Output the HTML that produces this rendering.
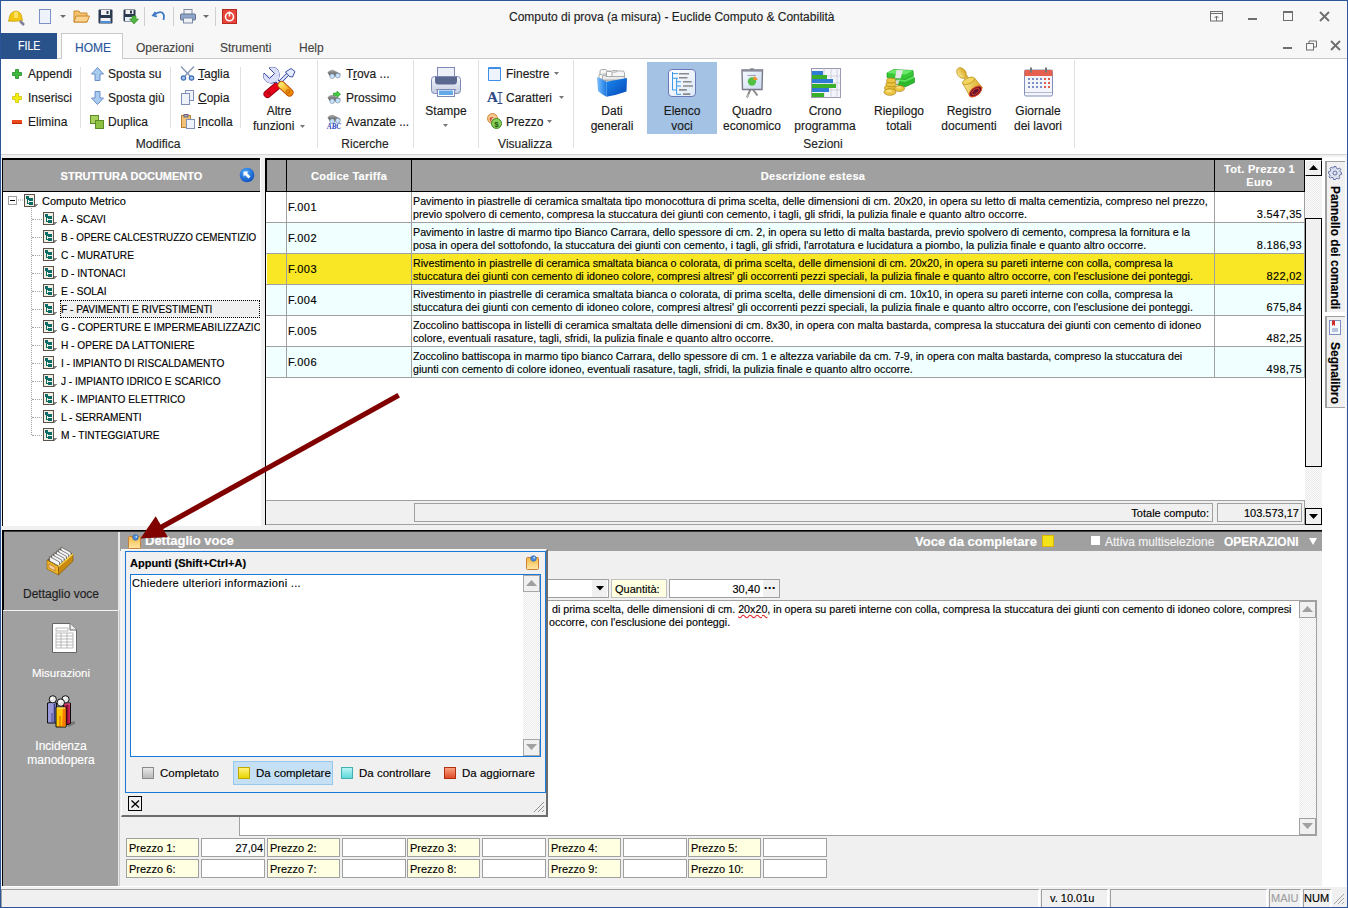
<!DOCTYPE html>
<html><head><meta charset="utf-8">
<style>
*{margin:0;padding:0;box-sizing:border-box}
html,body{width:1348px;height:908px;overflow:hidden;background:#f0f0f0;font-family:"Liberation Sans",sans-serif;font-size:12px;color:#000}
.a{position:absolute}
.t{position:absolute;white-space:nowrap;line-height:12px}
.r{color:#1a1a1a;font-size:12px}
.sep{position:absolute;width:1px;background:#e1e1e1}
.gl{position:absolute;color:#262626;font-size:12px;white-space:nowrap;line-height:12px;text-align:center}
.bc{position:absolute;color:#1a1a1a;font-size:12px;white-space:nowrap;line-height:15px;text-align:center}
.hdr{background:#a0a0a0}
.bk{background:#000}
svg{position:absolute;overflow:visible}
.s11{font-size:11px;line-height:11px}
.t,.bc,.gl{-webkit-text-stroke:0.15px currentColor}

</style></head><body>
<!-- title bar -->
<div class="a" style="left:0;top:0;width:1348px;height:59px;background:#f7f7f7"></div>
<div class="t" style="left:509px;top:11px;font-size:12px;color:#1e1e1e">Computo di prova (a misura) - Euclide Computo &amp; Contabilità</div>
<!-- quick access icons -->
<svg style="left:7px;top:9px" width="18" height="16" viewBox="0 0 18 16">
 <path d="M2 11 Q2 3 9 2 Q15 3 15 10 L16 11 Q9 13 1 12 Z" fill="#f3c614" stroke="#c9a000" stroke-width="0.8"/>
 <path d="M7 3 Q9 2 11 3 L11 9 L7 9Z" fill="#ffe060"/>
 <path d="M13 12 L17 16" stroke="#7d7d96" stroke-width="2.5"/>
</svg>
<div class="a" style="left:39px;top:9px;width:12px;height:15px;background:#eef3fb;border:1px solid #7e91c4"></div>
<svg style="left:60px;top:15px" width="6" height="4"><path d="M0 0H6L3 3Z" fill="#6d6d6d"/></svg>
<svg style="left:73px;top:10px" width="17" height="13" viewBox="0 0 17 13">
 <path d="M1 1H6L7 3H14V12H1Z" fill="#f6c272" stroke="#c98a2e" stroke-width="1"/>
 <path d="M3 6H16.5L14 12H1Z" fill="#fbd38f" stroke="#c98a2e" stroke-width="1"/>
</svg>
<svg style="left:98px;top:9px" width="15" height="15" viewBox="0 0 15 15">
 <rect x="0.5" y="0.5" width="14" height="14" rx="1" fill="#2a3950"/>
 <rect x="3" y="1" width="9" height="5" fill="#f1f1f1"/><rect x="8.5" y="2" width="2" height="3" fill="#2a3950"/>
 <rect x="2.5" y="9" width="10" height="5" fill="#f1f1f1"/><rect x="2.5" y="12" width="10" height="2" fill="#4c8ed8"/>
</svg>
<svg style="left:123px;top:9px" width="16" height="16" viewBox="0 0 16 16">
 <rect x="0.5" y="0.5" width="12" height="12" rx="1" fill="#2a3950"/>
 <rect x="2.5" y="1" width="8" height="4" fill="#f1f1f1"/><rect x="7" y="1.5" width="2" height="3" fill="#2a3950"/>
 <rect x="2" y="8" width="9" height="4" fill="#e6eef8"/>
 <path d="M9 7H13V10H15.5L11 15L6.5 10H9Z" fill="#52b543" stroke="#2e8a22" stroke-width="0.6"/>
</svg>
<div class="a" style="left:144px;top:7px;width:1px;height:19px;background:#d0d0d0"></div>
<svg style="left:152px;top:10px" width="14" height="12" viewBox="0 0 14 12">
 <path d="M3.5 2 L1 5.5 L5 6.5" fill="none" stroke="#3d76c4" stroke-width="1.8"/>
 <path d="M2 5.5 Q6 1 10 2.5 Q13 4.5 11.5 10" fill="none" stroke="#3d76c4" stroke-width="1.8"/>
</svg>
<div class="a" style="left:173px;top:7px;width:1px;height:19px;background:#d0d0d0"></div>
<svg style="left:180px;top:9px" width="16" height="15" viewBox="0 0 16 15">
 <rect x="4" y="0.5" width="8" height="5" fill="#f2f2f2" stroke="#7c8aa6"/>
 <rect x="0.5" y="5" width="15" height="6" rx="1" fill="#8ea6cc" stroke="#61708e"/>
 <rect x="3.5" y="9" width="9" height="5" fill="#eef2f8" stroke="#7c8aa6"/>
</svg>
<svg style="left:203px;top:15px" width="6" height="4"><path d="M0 0H6L3 3Z" fill="#6d6d6d"/></svg>
<div class="a" style="left:215px;top:7px;width:1px;height:19px;background:#d0d0d0"></div>
<svg style="left:222px;top:9px" width="15" height="15" viewBox="0 0 15 15">
 <rect x="0.5" y="0.5" width="14" height="14" fill="#e8463a" stroke="#b52a20"/>
 <circle cx="7.5" cy="7.8" r="4" fill="none" stroke="#fff" stroke-width="1.6"/>
 <rect x="6.7" y="2.5" width="1.6" height="5" fill="#fff"/>
</svg>
<!-- window controls -->
<svg style="left:1210px;top:11px" width="14" height="11" viewBox="0 0 14 11">
 <rect x="0.5" y="0.5" width="12" height="9.5" fill="none" stroke="#6e6e6e"/>
 <path d="M0.5 2.5H12.5" stroke="#6e6e6e"/>
 <path d="M6.5 10V5 M4.5 7L6.5 5L8.5 7" fill="none" stroke="#6e6e6e" stroke-width="1"/>
</svg>
<div class="a" style="left:1248px;top:18px;width:9px;height:2px;background:#6e6e6e"></div>
<div class="a" style="left:1283px;top:11px;width:10px;height:10px;border:1px solid #6e6e6e;border-top-width:2px"></div>
<svg style="left:1319px;top:11px" width="11" height="11" viewBox="0 0 11 11"><path d="M1 1L10 10M10 1L1 10" stroke="#6e6e6e" stroke-width="1.8"/></svg>
<div class="a" style="left:1283px;top:47px;width:9px;height:2px;background:#6e6e6e"></div>
<svg style="left:1306px;top:40px" width="11" height="11" viewBox="0 0 11 11">
 <rect x="0.5" y="3.5" width="7" height="6.5" fill="none" stroke="#6e6e6e"/>
 <path d="M3 3.5V1H10.5V7H8" fill="none" stroke="#6e6e6e"/>
</svg>
<svg style="left:1330px;top:40px" width="11" height="11" viewBox="0 0 11 11"><path d="M1 1L10 10M10 1L1 10" stroke="#6e6e6e" stroke-width="1.8"/></svg>
<!-- tabs -->
<div class="a" style="left:0;top:58px;width:1348px;height:1px;background:#c9c9c9"></div>
<div class="a" style="left:1px;top:33px;width:56px;height:26px;background:#29528a"></div>
<div class="t" style="left:18px;top:40px;color:#fff;font-size:12px;transform:scaleX(0.88);transform-origin:0 0">FILE</div>
<div class="a" style="left:61px;top:33px;width:62px;height:27px;background:#fff;border:1px solid #c9c9c9;border-bottom:none"></div>
<div class="t" style="left:75px;top:42px;color:#2b579a;font-size:12px">HOME</div>
<div class="t" style="left:136px;top:42px;color:#444;font-size:12px">Operazioni</div>
<div class="t" style="left:220px;top:42px;color:#444;font-size:12px">Strumenti</div>
<div class="t" style="left:299px;top:42px;color:#444;font-size:12px">Help</div>
<!-- ribbon -->
<div class="a" style="left:1px;top:59px;width:1346px;height:95px;background:#fff"></div>
<div class="a" style="left:1px;top:154px;width:1346px;height:1px;background:#d5d5d5"></div>
<!-- Modifica -->
<svg style="left:12px;top:69px" width="10" height="10" viewBox="0 0 10 10"><path d="M3.5 0.5H6.5V3.5H9.5V6.5H6.5V9.5H3.5V6.5H0.5V3.5H3.5Z" fill="#3cb83c" stroke="#1f8a1f" stroke-width="0.8"/></svg>
<div class="t r" style="left:28px;top:68px">Appendi</div>
<svg style="left:12px;top:93px" width="10" height="10" viewBox="0 0 10 10"><path d="M3.5 0.5H6.5V3.5H9.5V6.5H6.5V9.5H3.5V6.5H0.5V3.5H3.5Z" fill="#f2ee10" stroke="#d2c200" stroke-width="0.8"/></svg>
<div class="t r" style="left:28px;top:92px">Inserisci</div>
<div class="a" style="left:12px;top:120px;width:10px;height:4px;background:#ea4a1a;border-bottom:1px solid #b92800"></div>
<div class="t r" style="left:28px;top:116px">Elimina</div>
<div class="sep" style="left:80px;top:67px;height:61px"></div>
<svg style="left:91px;top:67px" width="13" height="14" viewBox="0 0 13 14"><path d="M6.5 0.5L12.5 7H9V13.5H4V7H0.5Z" fill="#a9cbef" stroke="#5d86c5" stroke-width="0.9"/></svg>
<div class="t r" style="left:108px;top:68px">Sposta su</div>
<svg style="left:91px;top:91px" width="13" height="14" viewBox="0 0 13 14"><path d="M6.5 13.5L12.5 7H9V0.5H4V7H0.5Z" fill="#a9cbef" stroke="#5d86c5" stroke-width="0.9"/></svg>
<div class="t r" style="left:108px;top:92px">Sposta giù</div>
<svg style="left:90px;top:115px" width="14" height="14" viewBox="0 0 14 14"><rect x="0.5" y="0.5" width="8" height="8" fill="#a8d05c" stroke="#5c8a26"/><rect x="5.5" y="5.5" width="8" height="8" fill="#8cc040" stroke="#5c8a26"/></svg>
<div class="t r" style="left:108px;top:116px">Duplica</div>
<div class="sep" style="left:170px;top:67px;height:61px"></div>
<svg style="left:180px;top:66px" width="15" height="15" viewBox="0 0 15 15"><path d="M1 0.5L10 10M14 0.5L5 10" stroke="#8296b4" stroke-width="1.3"/><circle cx="3.5" cy="12" r="2.2" fill="#a5c4ec" stroke="#3d6fb8" stroke-width="1.2"/><circle cx="11.5" cy="12" r="2.2" fill="#a5c4ec" stroke="#3d6fb8" stroke-width="1.2"/></svg>
<div class="t r" style="left:198px;top:68px"><u>T</u>aglia</div>
<svg style="left:181px;top:90px" width="14" height="15" viewBox="0 0 14 15"><rect x="4.5" y="0.5" width="8" height="10" fill="#eef2fa" stroke="#7f8fb8"/><rect x="0.5" y="3.5" width="8" height="11" fill="#eef2fa" stroke="#7f8fb8"/></svg>
<div class="t r" style="left:198px;top:92px"><u>C</u>opia</div>
<svg style="left:181px;top:114px" width="14" height="15" viewBox="0 0 14 15"><rect x="0.5" y="1.5" width="9" height="12" fill="#f0c27a" stroke="#b8842e"/><rect x="3" y="0.5" width="4" height="2.5" fill="#aab" stroke="#667"/><rect x="5.5" y="5.5" width="8" height="9" fill="#eef2fa" stroke="#7f8fb8"/></svg>
<div class="t r" style="left:198px;top:116px"><u>I</u>ncolla</div>
<div class="sep" style="left:240px;top:67px;height:61px"></div>
<svg style="left:258px;top:62px" width="44" height="42" viewBox="0 0 44 42">
 <defs><linearGradient id="orH" x1="0" y1="0" x2="1" y2="1"><stop offset="0" stop-color="#ffe060"/><stop offset="1" stop-color="#f08a00"/></linearGradient></defs>
 <path d="M19.5 22.5 L30 12" stroke="#2a3a9a" stroke-width="3.6"/>
 <path d="M19.5 22.5 L30 12" stroke="#eaf2ff" stroke-width="1.8"/>
 <path d="M27.5 10 L33 6.5 L37 9.5 L34.5 15 L31.5 14.5 Z" fill="#e4ecff" stroke="#2a3a9a" stroke-width="0.9"/>
 <path d="M9.5 32 L19 24" stroke="#8a0010" stroke-width="8" stroke-linecap="round"/>
 <path d="M9.5 32 L19 24" stroke="#e8001a" stroke-width="6.2" stroke-linecap="round"/>
 <circle cx="11" cy="31" r="1.5" fill="none" stroke="#a00010" stroke-width="0.9"/>
 <path d="M6 11 L11.5 16.5 L16.5 11.5 L11 6 Q17 4 20 8 Q23 13 20 18 L23 21" fill="#dcdff8" stroke="#2a3a9a" stroke-width="0.9"/>
 <path d="M6 11 Q4.5 17 9 20 Q13.5 22.5 18 20 L22 23.5 L24 21.5 L20 18" fill="#dcdff8" stroke="#2a3a9a" stroke-width="0.9"/>
 <path d="M6 11 L11.5 16.5 L16.5 11.5 L11 6 Q17 4 20 8 Q23 13 20 18 Q13.5 22.5 9 20 Q4.5 17 6 11Z" fill="#dcdff8"/>
 <path d="M6 11 L11.5 16.5 L16.5 11.5 L11 6" fill="none" stroke="#2a3a9a" stroke-width="0.9"/>
 <path d="M31.5 30.5 L23.5 23" stroke="#b85000" stroke-width="8" stroke-linecap="round"/>
 <path d="M31.5 30.5 L23.5 23" stroke="url(#orH)" stroke-width="6.2" stroke-linecap="round"/>
 <circle cx="30" cy="29.5" r="1.7" fill="none" stroke="#b85000" stroke-width="0.9"/>
</svg>
<div class="bc" style="left:244px;top:104px;width:70px">Altre</div><div class="t r" style="left:253px;top:119px;line-height:15px">funzioni</div>
<svg style="left:300px;top:125px" width="6" height="4"><path d="M0 0H5L2.5 3Z" fill="#777"/></svg>
<div class="gl" style="left:108px;top:138px;width:100px">Modifica</div>
<div class="sep" style="left:317px;top:60px;height:88px"></div>
<!-- Ricerche -->
<svg style="left:327px;top:69px" width="14" height="11" viewBox="0 0 14 11"><defs><linearGradient id="bnG0" x1="0" y1="0" x2="0" y2="1"><stop offset="0" stop-color="#b0b0b0"/><stop offset="1" stop-color="#404040"/></linearGradient></defs><path d="M0.5 3.5 Q2.5 0.5 6 0.8 L13.5 4.8 L12.5 8 L2.5 6.8Z" fill="url(#bnG0)"/><circle cx="5.2" cy="7.2" r="2.4" fill="#c4e2ff" stroke="#7a8898" stroke-width="0.6"/><circle cx="10.8" cy="6.6" r="2.4" fill="#c4e2ff" stroke="#7a8898" stroke-width="0.6"/></svg>
<div class="t r" style="left:346px;top:68px">T<u>r</u>ova ...</div>
<svg style="left:327px;top:91px" width="14" height="14" viewBox="0 0 14 14"><defs><linearGradient id="bnG3" x1="0" y1="0" x2="0" y2="1"><stop offset="0" stop-color="#b0b0b0"/><stop offset="1" stop-color="#404040"/></linearGradient></defs><path d="M0.5 6.5 Q2.5 3.5 6 3.8 L13.5 7.8 L12.5 11 L2.5 9.8Z" fill="url(#bnG3)"/><circle cx="5.2" cy="10.2" r="2.4" fill="#c4e2ff" stroke="#7a8898" stroke-width="0.6"/><circle cx="10.8" cy="9.6" r="2.4" fill="#c4e2ff" stroke="#7a8898" stroke-width="0.6"/><path d="M6.5 2 H10 V0 L13.5 3.2 L10 6.4 V4.4 H6.5Z" fill="#40d040" stroke="#1e8a1e" stroke-width="0.6"/></svg>
<div class="t r" style="left:346px;top:92px">Prossimo</div>
<svg style="left:327px;top:114px" width="15" height="16" viewBox="0 0 15 16"><defs><linearGradient id="bnG0" x1="0" y1="0" x2="0" y2="1"><stop offset="0" stop-color="#b0b0b0"/><stop offset="1" stop-color="#404040"/></linearGradient></defs><path d="M0.5 3.5 Q2.5 0.5 6 0.8 L13.5 4.8 L12.5 8 L2.5 6.8Z" fill="url(#bnG0)"/><circle cx="5.2" cy="7.2" r="2.4" fill="#c4e2ff" stroke="#7a8898" stroke-width="0.6"/><circle cx="10.8" cy="6.6" r="2.4" fill="#c4e2ff" stroke="#7a8898" stroke-width="0.6"/><text x="0" y="15" font-family="Liberation Serif" font-style="italic" font-weight="bold" font-size="7.5" fill="#2a48b8" textLength="14" lengthAdjust="spacingAndGlyphs">ABC</text></svg>
<div class="t r" style="left:346px;top:116px">Avanzate ...</div>
<div class="gl" style="left:315px;top:138px;width:100px">Ricerche</div>
<div class="sep" style="left:413px;top:60px;height:88px"></div>
<!-- Stampe -->
<svg style="left:424px;top:62px" width="44" height="42" viewBox="0 0 44 42">
 <defs><linearGradient id="prB" x1="0" y1="0" x2="0" y2="1"><stop offset="0" stop-color="#f4f6fb"/><stop offset="1" stop-color="#c4cce0"/></linearGradient></defs>
 <rect x="13.5" y="5.5" width="17" height="12" fill="#eef0f8" stroke="#7d8ab8"/>
 <rect x="7.5" y="14.5" width="29" height="17" rx="3" fill="url(#prB)" stroke="#7d8ab8"/>
 <path d="M11 15 H33 V19 Q33 22.5 30 22.5 H14 Q11 22.5 11 19Z" fill="#5a6890"/>
 <rect x="13.5" y="17.5" width="17" height="0.1" fill="#5a6890"/>
 <rect x="12.5" y="27" width="19" height="1.5" fill="#4a5a88"/>
 <rect x="13.5" y="27.5" width="17" height="7" fill="#fff" stroke="#7d8ab8"/>
 <rect x="15" y="28.5" width="14" height="4.5" fill="#64aae6"/>
</svg>
<div class="bc" style="left:411px;top:104px;width:70px">Stampe</div>
<svg style="left:443px;top:124px" width="6" height="4"><path d="M0 0H5L2.5 3Z" fill="#777"/></svg>
<div class="sep" style="left:478px;top:60px;height:88px"></div>
<!-- Visualizza -->
<div class="a" style="left:488px;top:67px;width:13px;height:14px;background:#eef3fc;border:1px solid #3d8ee6;border-top-width:2px;border-radius:1px"></div>
<div class="t r" style="left:506px;top:68px">Finestre</div>
<svg style="left:554px;top:72px" width="6" height="4"><path d="M0 0H5L2.5 3Z" fill="#777"/></svg>
<div class="t" style="left:487px;top:90px;font-family:'Liberation Serif';font-weight:bold;font-size:15px;line-height:15px;color:#2a4a86">A</div>
<svg style="left:497px;top:92px" width="6" height="12" viewBox="0 0 6 12"><path d="M0.5 0.5H5.5M3 0.5V11.5M0.5 11.5H5.5" stroke="#2a4a86" stroke-width="1"/></svg>
<div class="t r" style="left:506px;top:92px">Caratteri</div>
<svg style="left:559px;top:96px" width="6" height="4"><path d="M0 0H5L2.5 3Z" fill="#777"/></svg>
<svg style="left:487px;top:113px" width="15" height="16" viewBox="0 0 15 16"><circle cx="5.5" cy="5.5" r="5" fill="#f4c690" stroke="#d98a3a"/><text x="2.5" y="8.5" font-size="7" fill="#c0392b" font-family="Liberation Sans">€</text><circle cx="9.5" cy="10.5" r="5" fill="#8ad05a" stroke="#3c8a22"/><text x="7.2" y="13.5" font-size="8" font-weight="bold" fill="#1d5a10" font-family="Liberation Sans">$</text></svg>
<div class="t r" style="left:506px;top:116px">Prezzo</div>
<svg style="left:547px;top:120px" width="6" height="4"><path d="M0 0H5L2.5 3Z" fill="#777"/></svg>
<div class="gl" style="left:475px;top:138px;width:100px">Visualizza</div>
<div class="sep" style="left:573px;top:60px;height:88px"></div>
<!-- Sezioni -->
<div class="a" style="left:647px;top:62px;width:70px;height:72px;background:#a4c2e4"></div>
<svg style="left:590px;top:62px" width="44" height="38" viewBox="0 0 44 38">
 <defs><linearGradient id="dgR" x1="0" y1="0" x2="1" y2="1"><stop offset="0" stop-color="#1a88f0"/><stop offset="1" stop-color="#0648b8"/></linearGradient>
 <linearGradient id="dgL" x1="0" y1="0" x2="1" y2="0"><stop offset="0" stop-color="#7cc0ff"/><stop offset="1" stop-color="#1a78e0"/></linearGradient></defs>
 <path d="M10 18 V9 Q10 7.5 11.5 7.5 H16 L17.5 9 H21 V18Z" fill="#f6f6f6" stroke="#9a9a9a" stroke-width="0.8"/>
 <path d="M16.5 19 V9.5 H21.5 L22.5 8.5 H27 L28 10.5 V19Z" fill="#fafafa" stroke="#9a9a9a" stroke-width="0.8"/>
 <path d="M22 19 V10 H26 L27.5 9 H33.5 L34.5 11 V18Z" fill="#f6f6f6" stroke="#9a9a9a" stroke-width="0.8"/>
 <path d="M9 16 V12.5 H12 L12.5 12 H16 V19Z" fill="#fcfcfc" stroke="#9a9a9a" stroke-width="0.8"/>
 <path d="M12.5 18 V13.5 H15 L16 14.5 H34.5 L35 18Z" fill="#ececec" stroke="#9a9a9a" stroke-width="0.8"/>
 <path d="M7 15 L16.5 19.7 L16.5 34.7 Q11 32 8 29Z" fill="url(#dgL)"/>
 <path d="M16.5 19.7 L37 16 L36.5 29.5 Q27 33 16.5 34.7Z" fill="url(#dgR)"/>
</svg>
<div class="bc" style="left:577px;top:104px;width:70px">Dati<br>generali</div>
<svg style="left:668px;top:69px" width="28" height="28" viewBox="0 0 28 28">
 <defs><linearGradient id="evG" x1="0" y1="0" x2="1" y2="1"><stop offset="0" stop-color="#ffffff"/><stop offset="1" stop-color="#dde8f8"/></linearGradient></defs>
 <rect x="0.5" y="0.5" width="27" height="27" rx="3.5" fill="url(#evG)" stroke="#6a78b8"/>
 <path d="M4.5 3 V21 M4.5 4.6 H10 M4.5 9.2 H10 M8.6 9.2 V25.4 M8.6 12.7 H13 M8.6 17 H13 M4.5 21 H9 M8.6 25.4 H13" fill="none" stroke="#3a9ae8" stroke-width="1"/>
 <path d="M11 4.8 H21 M11 8.8 H19.5 M15 12.7 H23.7 M15 17 H25 M11 20.9 H18.8 M15 25.1 H22.3" stroke="#8a8a8a" stroke-width="1.6"/>
</svg>
<div class="bc" style="left:647px;top:104px;width:70px">Elenco<br>voci</div>
<svg style="left:741px;top:67px" width="24" height="32" viewBox="0 0 24 32">
 <defs><linearGradient id="qeG" x1="0" y1="0" x2="1" y2="1"><stop offset="0" stop-color="#f8fbff"/><stop offset="1" stop-color="#c8daf0"/></linearGradient></defs>
 <path d="M9.5 22 L6 30.5 M11.5 22 L16.5 28.5" stroke="#8a8a8a" stroke-width="2"/>
 <path d="M6 30.5 L7.5 27" stroke="#dcdcdc" stroke-width="0.8"/>
 <rect x="9" y="1" width="4" height="2" rx="0.5" fill="#a8a8a8"/>
 <path d="M1 3 H21.5 L21 22.5 H1.5Z" fill="url(#qeG)" stroke="#7a7a88" stroke-width="1.4"/>
 <rect x="1" y="3" width="20.5" height="1.6" fill="#8a8a9a"/>
 <path d="M6.5 8.4 H15" stroke="#8a8aa0" stroke-width="0.8"/>
 <circle cx="11" cy="14.5" r="4.2" fill="#52c042"/>
 <path d="M12.5 9.5 A4 4 0 0 1 16.5 13 L12.5 13Z" fill="#f5902e"/>
</svg>
<div class="bc" style="left:717px;top:104px;width:70px">Quadro<br>economico</div>
<svg style="left:811px;top:68px" width="30" height="30" viewBox="0 0 30 30">
 <rect x="0.5" y="0.5" width="29" height="29" fill="#f4f4fb" stroke="#9a9ab0"/>
 <path d="M13 0.5V29.5 M20 0.5V29.5 M26 0.5V29.5 M0.5 8H29.5 M0.5 15H29.5 M0.5 22H29.5" stroke="#c9c9d8" stroke-width="0.8"/>
 <rect x="1" y="3" width="11" height="4" fill="#2f7ad6"/><rect x="1" y="7" width="15" height="4" fill="#3ab02a"/>
 <rect x="1" y="11" width="21" height="4" fill="#2f7ad6"/><rect x="1" y="16" width="24" height="4" fill="#3ab02a"/>
 <rect x="1" y="20" width="17" height="4" fill="#2f7ad6"/><rect x="1" y="25" width="12" height="4" fill="#3ab02a"/>
</svg>
<div class="bc" style="left:790px;top:104px;width:70px">Crono<br>programma</div>
<svg style="left:876px;top:62px" width="42" height="38" viewBox="0 0 42 38">
 <path d="M18 18 L37 14.5 L38.5 16 L38.5 20.5 L29 25 L18.5 22Z" fill="#2cb82c" stroke="#1a8a1a" stroke-width="0.6"/>
 <path d="M18 18 L37 14.5 L38.5 16 L29 20Z" fill="#58e058"/>
 <path d="M11 11 L17.5 7.5 L37 8.5 L37.5 13.5 L29 17.5 L11 15.5Z" fill="#36c836" stroke="#1a8a1a" stroke-width="0.6"/>
 <path d="M11 11 L17.5 7.5 L37 8.5 L29.5 12.5Z" fill="#6ae86a"/>
 <path d="M20.5 8 L27 8.3 L24.5 16.5 L19 16Z" fill="#e6e6e6"/>
 <path d="M19 18.5 L23.5 18 L22 22.5 L18.5 22Z" fill="#dcdcdc"/>
 <g fill="#ecc640" stroke="#a88010" stroke-width="0.7">
 <ellipse cx="14" cy="26" rx="5.5" ry="3.4"/>
 <ellipse cx="15" cy="22" rx="5" ry="2.8"/>
 <ellipse cx="15" cy="18.5" rx="4.5" ry="2.5"/>
 <ellipse cx="14" cy="30" rx="6" ry="3.3"/>
 <ellipse cx="23.5" cy="26.5" rx="5" ry="3"/>
 </g>
 <ellipse cx="13" cy="29" rx="3" ry="1.2" fill="#f8e080"/><ellipse cx="23" cy="25.5" rx="2.5" ry="1" fill="#f8e080"/>
</svg>
<div class="bc" style="left:864px;top:104px;width:70px">Riepilogo<br>totali</div>
<svg style="left:952px;top:62px" width="34" height="38" viewBox="0 0 34 38">
 <defs><linearGradient id="stG" x1="0" y1="0" x2="1" y2="0"><stop offset="0" stop-color="#f8e890"/><stop offset="1" stop-color="#d8a820"/></linearGradient></defs>
 <path d="M11 14.5 L15 20.5 L18.5 19 L14.5 13Z" fill="url(#stG)" stroke="#b88a10" stroke-width="0.7"/>
 <ellipse cx="9.5" cy="11" rx="4.2" ry="5.8" transform="rotate(-35 9.5 11)" fill="url(#stG)" stroke="#b88a10" stroke-width="0.7"/>
 <path d="M10.5 21 L22.5 16 L30.5 26 L18 34.5Z" fill="url(#stG)" stroke="#b88a10" stroke-width="0.7"/>
 <ellipse cx="16.5" cy="18.8" rx="6.3" ry="2.9" transform="rotate(-24 16.5 18.8)" fill="#f2d660" stroke="#b88a10" stroke-width="0.7"/>
 <ellipse cx="23.5" cy="29.5" rx="7.2" ry="4" transform="rotate(-38 23.5 29.5)" fill="#6a1030" stroke="#e04a20" stroke-width="1"/>
 <ellipse cx="23.5" cy="29.5" rx="4.4" ry="2.2" transform="rotate(-38 23.5 29.5)" fill="none" stroke="#e04a20" stroke-width="0.8"/>
</svg>
<div class="bc" style="left:934px;top:104px;width:70px">Registro<br>documenti</div>
<svg style="left:1024px;top:67px" width="29" height="30" viewBox="0 0 29 30">
 <rect x="0.5" y="3" width="28" height="26" rx="1.5" fill="#f3f5fa" stroke="#8090b8"/>
 <rect x="0.5" y="3" width="28" height="6" fill="#e66050"/>
 <rect x="6" y="0.5" width="2" height="5" fill="#777"/><rect x="21" y="0.5" width="2" height="5" fill="#777"/>
 <g fill="#7a8fc8"><rect x="4" y="11" width="2" height="2"/><rect x="8" y="11" width="2" height="2"/><rect x="12" y="11" width="2" height="2"/><rect x="16" y="11" width="2" height="2"/>
 <rect x="4" y="15" width="2" height="2"/><rect x="8" y="15" width="2" height="2"/><rect x="12" y="15" width="2" height="2"/><rect x="16" y="15" width="2" height="2"/>
 <rect x="4" y="19" width="2" height="2"/><rect x="8" y="19" width="2" height="2"/><rect x="12" y="19" width="2" height="2"/><rect x="16" y="19" width="2" height="2"/></g>
 <g fill="#e25a4a"><rect x="20" y="11" width="2" height="2"/><rect x="24" y="11" width="2" height="2"/><rect x="20" y="15" width="2" height="2"/><rect x="24" y="15" width="2" height="2"/><rect x="20" y="19" width="2" height="2"/><rect x="24" y="19" width="2" height="2"/></g>
 <rect x="1" y="25" width="27" height="1" fill="#b0b8d0"/>
</svg>
<div class="bc" style="left:1003px;top:104px;width:70px">Giornale<br>dei lavori</div>
<div class="gl" style="left:773px;top:138px;width:100px">Sezioni</div>
<div class="sep" style="left:1074px;top:60px;height:88px"></div>
<!-- left tree panel -->
<div class="a" style="left:2px;top:158px;width:259px;height:368px;background:#fff"></div>
<div class="a bk" style="left:2px;top:158px;width:258px;height:2px"></div>
<div class="a bk" style="left:2px;top:158px;width:1px;height:368px"></div>
<div class="a hdr" style="left:3px;top:160px;width:257px;height:31px"></div>
<div class="a bk" style="left:3px;top:191px;width:257px;height:1px"></div>
<div class="t" style="left:3px;top:171px;width:257px;text-align:center;color:#fff;font-weight:bold;font-size:11px;line-height:11px">STRUTTURA DOCUMENTO</div>
<svg style="left:239px;top:167px" width="16" height="16" viewBox="0 0 16 16">
 <defs><radialGradient id="bg1" cx="0.4" cy="0.3" r="0.8"><stop offset="0" stop-color="#4aa8ff"/><stop offset="1" stop-color="#0848b8"/></radialGradient></defs>
 <circle cx="8" cy="8" r="7.3" fill="url(#bg1)"/>
 <path d="M4.5 4.5H9.5L8 6L11.5 9.5L9.5 11.5L6 8L4.5 9.5Z" fill="#fff"/>
</svg>
<div class="a" style="left:8px;top:196px;width:9px;height:9px;border:1px solid #a0a0a0;background:#fff"></div>
<div class="a" style="left:10px;top:200px;width:5px;height:1px;background:#000"></div>
<svg style="left:17px;top:199px" width="8" height="2"><path d="M1 1H2 M3 1H4 M5 1H6" stroke="#a0a0a0" stroke-width="1"/></svg>
<svg style="left:24px;top:194px" width="15" height="14" viewBox="0 0 15 14" shape-rendering="crispEdges"><path d="M11 10H14L11 13Z" fill="#8a8a8a"/><rect x="0.5" y="0.5" width="10" height="12" fill="#f3efe3" stroke="#5a524a"/><g fill="#0b6b66"><rect x="2" y="2" width="3" height="3"/><rect x="5" y="4" width="4" height="3"/><rect x="5" y="8" width="4" height="3"/><rect x="3" y="5" width="1" height="5"/><rect x="4" y="5" width="1" height="1"/><rect x="4" y="9" width="1" height="1"/></g></svg>
<div class="t s11" style="left:42px;top:196px">Computo Metrico</div>
<div class="a" style="left:31px;top:208px;width:1px;height:227px;border-left:1px dotted #a0a0a0"></div>
<div class="a" style="left:32px;top:219px;width:10px;height:1px;border-top:1px dotted #a0a0a0"></div>
<svg style="left:43px;top:212px" width="15" height="14" viewBox="0 0 15 14" shape-rendering="crispEdges"><path d="M11 10H14L11 13Z" fill="#8a8a8a"/><rect x="0.5" y="0.5" width="10" height="12" fill="#f3efe3" stroke="#5a524a"/><g fill="#0b6b66"><rect x="2" y="2" width="3" height="3"/><rect x="5" y="4" width="4" height="3"/><rect x="5" y="8" width="4" height="3"/><rect x="3" y="5" width="1" height="5"/><rect x="4" y="5" width="1" height="1"/><rect x="4" y="9" width="1" height="1"/></g></svg>
<div class="a" style="left:61px;top:214px;width:199px;height:12px;overflow:hidden"><div class="t s11" style="left:0;top:0;transform:scaleX(0.92);transform-origin:0 0">A - SCAVI</div></div>
<div class="a" style="left:32px;top:237px;width:10px;height:1px;border-top:1px dotted #a0a0a0"></div>
<svg style="left:43px;top:230px" width="15" height="14" viewBox="0 0 15 14" shape-rendering="crispEdges"><path d="M11 10H14L11 13Z" fill="#8a8a8a"/><rect x="0.5" y="0.5" width="10" height="12" fill="#f3efe3" stroke="#5a524a"/><g fill="#0b6b66"><rect x="2" y="2" width="3" height="3"/><rect x="5" y="4" width="4" height="3"/><rect x="5" y="8" width="4" height="3"/><rect x="3" y="5" width="1" height="5"/><rect x="4" y="5" width="1" height="1"/><rect x="4" y="9" width="1" height="1"/></g></svg>
<div class="a" style="left:61px;top:232px;width:199px;height:12px;overflow:hidden"><div class="t s11" style="left:0;top:0;transform:scaleX(0.895);transform-origin:0 0">B - OPERE CALCESTRUZZO CEMENTIZIO</div></div>
<div class="a" style="left:32px;top:255px;width:10px;height:1px;border-top:1px dotted #a0a0a0"></div>
<svg style="left:43px;top:248px" width="15" height="14" viewBox="0 0 15 14" shape-rendering="crispEdges"><path d="M11 10H14L11 13Z" fill="#8a8a8a"/><rect x="0.5" y="0.5" width="10" height="12" fill="#f3efe3" stroke="#5a524a"/><g fill="#0b6b66"><rect x="2" y="2" width="3" height="3"/><rect x="5" y="4" width="4" height="3"/><rect x="5" y="8" width="4" height="3"/><rect x="3" y="5" width="1" height="5"/><rect x="4" y="5" width="1" height="1"/><rect x="4" y="9" width="1" height="1"/></g></svg>
<div class="a" style="left:61px;top:250px;width:199px;height:12px;overflow:hidden"><div class="t s11" style="left:0;top:0;transform:scaleX(0.92);transform-origin:0 0">C - MURATURE</div></div>
<div class="a" style="left:32px;top:273px;width:10px;height:1px;border-top:1px dotted #a0a0a0"></div>
<svg style="left:43px;top:266px" width="15" height="14" viewBox="0 0 15 14" shape-rendering="crispEdges"><path d="M11 10H14L11 13Z" fill="#8a8a8a"/><rect x="0.5" y="0.5" width="10" height="12" fill="#f3efe3" stroke="#5a524a"/><g fill="#0b6b66"><rect x="2" y="2" width="3" height="3"/><rect x="5" y="4" width="4" height="3"/><rect x="5" y="8" width="4" height="3"/><rect x="3" y="5" width="1" height="5"/><rect x="4" y="5" width="1" height="1"/><rect x="4" y="9" width="1" height="1"/></g></svg>
<div class="a" style="left:61px;top:268px;width:199px;height:12px;overflow:hidden"><div class="t s11" style="left:0;top:0;transform:scaleX(0.92);transform-origin:0 0">D - INTONACI</div></div>
<div class="a" style="left:32px;top:291px;width:10px;height:1px;border-top:1px dotted #a0a0a0"></div>
<svg style="left:43px;top:284px" width="15" height="14" viewBox="0 0 15 14" shape-rendering="crispEdges"><path d="M11 10H14L11 13Z" fill="#8a8a8a"/><rect x="0.5" y="0.5" width="10" height="12" fill="#f3efe3" stroke="#5a524a"/><g fill="#0b6b66"><rect x="2" y="2" width="3" height="3"/><rect x="5" y="4" width="4" height="3"/><rect x="5" y="8" width="4" height="3"/><rect x="3" y="5" width="1" height="5"/><rect x="4" y="5" width="1" height="1"/><rect x="4" y="9" width="1" height="1"/></g></svg>
<div class="a" style="left:61px;top:286px;width:199px;height:12px;overflow:hidden"><div class="t s11" style="left:0;top:0;transform:scaleX(0.92);transform-origin:0 0">E - SOLAI</div></div>
<div class="a" style="left:32px;top:309px;width:10px;height:1px;border-top:1px dotted #a0a0a0"></div>
<div class="a" style="left:60px;top:300px;width:200px;height:18px;background:#f0f0f0;border:1px dotted #000"></div>
<svg style="left:43px;top:302px" width="15" height="14" viewBox="0 0 15 14" shape-rendering="crispEdges"><path d="M11 10H14L11 13Z" fill="#8a8a8a"/><rect x="0.5" y="0.5" width="10" height="12" fill="#f3efe3" stroke="#5a524a"/><g fill="#0b6b66"><rect x="2" y="2" width="3" height="3"/><rect x="5" y="4" width="4" height="3"/><rect x="5" y="8" width="4" height="3"/><rect x="3" y="5" width="1" height="5"/><rect x="4" y="5" width="1" height="1"/><rect x="4" y="9" width="1" height="1"/></g></svg>
<div class="a" style="left:61px;top:304px;width:199px;height:12px;overflow:hidden"><div class="t s11" style="left:0;top:0;transform:scaleX(0.92);transform-origin:0 0">F - PAVIMENTI E RIVESTIMENTI</div></div>
<div class="a" style="left:32px;top:327px;width:10px;height:1px;border-top:1px dotted #a0a0a0"></div>
<svg style="left:43px;top:320px" width="15" height="14" viewBox="0 0 15 14" shape-rendering="crispEdges"><path d="M11 10H14L11 13Z" fill="#8a8a8a"/><rect x="0.5" y="0.5" width="10" height="12" fill="#f3efe3" stroke="#5a524a"/><g fill="#0b6b66"><rect x="2" y="2" width="3" height="3"/><rect x="5" y="4" width="4" height="3"/><rect x="5" y="8" width="4" height="3"/><rect x="3" y="5" width="1" height="5"/><rect x="4" y="5" width="1" height="1"/><rect x="4" y="9" width="1" height="1"/></g></svg>
<div class="a" style="left:61px;top:322px;width:199px;height:12px;overflow:hidden"><div class="t s11" style="left:0;top:0;transform:scaleX(0.92);transform-origin:0 0">G - COPERTURE E IMPERMEABILIZZAZIONI</div></div>
<div class="a" style="left:32px;top:345px;width:10px;height:1px;border-top:1px dotted #a0a0a0"></div>
<svg style="left:43px;top:338px" width="15" height="14" viewBox="0 0 15 14" shape-rendering="crispEdges"><path d="M11 10H14L11 13Z" fill="#8a8a8a"/><rect x="0.5" y="0.5" width="10" height="12" fill="#f3efe3" stroke="#5a524a"/><g fill="#0b6b66"><rect x="2" y="2" width="3" height="3"/><rect x="5" y="4" width="4" height="3"/><rect x="5" y="8" width="4" height="3"/><rect x="3" y="5" width="1" height="5"/><rect x="4" y="5" width="1" height="1"/><rect x="4" y="9" width="1" height="1"/></g></svg>
<div class="a" style="left:61px;top:340px;width:199px;height:12px;overflow:hidden"><div class="t s11" style="left:0;top:0;transform:scaleX(0.92);transform-origin:0 0">H - OPERE DA LATTONIERE</div></div>
<div class="a" style="left:32px;top:363px;width:10px;height:1px;border-top:1px dotted #a0a0a0"></div>
<svg style="left:43px;top:356px" width="15" height="14" viewBox="0 0 15 14" shape-rendering="crispEdges"><path d="M11 10H14L11 13Z" fill="#8a8a8a"/><rect x="0.5" y="0.5" width="10" height="12" fill="#f3efe3" stroke="#5a524a"/><g fill="#0b6b66"><rect x="2" y="2" width="3" height="3"/><rect x="5" y="4" width="4" height="3"/><rect x="5" y="8" width="4" height="3"/><rect x="3" y="5" width="1" height="5"/><rect x="4" y="5" width="1" height="1"/><rect x="4" y="9" width="1" height="1"/></g></svg>
<div class="a" style="left:61px;top:358px;width:199px;height:12px;overflow:hidden"><div class="t s11" style="left:0;top:0;transform:scaleX(0.92);transform-origin:0 0">I - IMPIANTO DI RISCALDAMENTO</div></div>
<div class="a" style="left:32px;top:381px;width:10px;height:1px;border-top:1px dotted #a0a0a0"></div>
<svg style="left:43px;top:374px" width="15" height="14" viewBox="0 0 15 14" shape-rendering="crispEdges"><path d="M11 10H14L11 13Z" fill="#8a8a8a"/><rect x="0.5" y="0.5" width="10" height="12" fill="#f3efe3" stroke="#5a524a"/><g fill="#0b6b66"><rect x="2" y="2" width="3" height="3"/><rect x="5" y="4" width="4" height="3"/><rect x="5" y="8" width="4" height="3"/><rect x="3" y="5" width="1" height="5"/><rect x="4" y="5" width="1" height="1"/><rect x="4" y="9" width="1" height="1"/></g></svg>
<div class="a" style="left:61px;top:376px;width:199px;height:12px;overflow:hidden"><div class="t s11" style="left:0;top:0;transform:scaleX(0.92);transform-origin:0 0">J - IMPIANTO IDRICO E SCARICO</div></div>
<div class="a" style="left:32px;top:399px;width:10px;height:1px;border-top:1px dotted #a0a0a0"></div>
<svg style="left:43px;top:392px" width="15" height="14" viewBox="0 0 15 14" shape-rendering="crispEdges"><path d="M11 10H14L11 13Z" fill="#8a8a8a"/><rect x="0.5" y="0.5" width="10" height="12" fill="#f3efe3" stroke="#5a524a"/><g fill="#0b6b66"><rect x="2" y="2" width="3" height="3"/><rect x="5" y="4" width="4" height="3"/><rect x="5" y="8" width="4" height="3"/><rect x="3" y="5" width="1" height="5"/><rect x="4" y="5" width="1" height="1"/><rect x="4" y="9" width="1" height="1"/></g></svg>
<div class="a" style="left:61px;top:394px;width:199px;height:12px;overflow:hidden"><div class="t s11" style="left:0;top:0;transform:scaleX(0.92);transform-origin:0 0">K - IMPIANTO ELETTRICO</div></div>
<div class="a" style="left:32px;top:417px;width:10px;height:1px;border-top:1px dotted #a0a0a0"></div>
<svg style="left:43px;top:410px" width="15" height="14" viewBox="0 0 15 14" shape-rendering="crispEdges"><path d="M11 10H14L11 13Z" fill="#8a8a8a"/><rect x="0.5" y="0.5" width="10" height="12" fill="#f3efe3" stroke="#5a524a"/><g fill="#0b6b66"><rect x="2" y="2" width="3" height="3"/><rect x="5" y="4" width="4" height="3"/><rect x="5" y="8" width="4" height="3"/><rect x="3" y="5" width="1" height="5"/><rect x="4" y="5" width="1" height="1"/><rect x="4" y="9" width="1" height="1"/></g></svg>
<div class="a" style="left:61px;top:412px;width:199px;height:12px;overflow:hidden"><div class="t s11" style="left:0;top:0;transform:scaleX(0.92);transform-origin:0 0">L - SERRAMENTI</div></div>
<div class="a" style="left:32px;top:435px;width:10px;height:1px;border-top:1px dotted #a0a0a0"></div>
<svg style="left:43px;top:428px" width="15" height="14" viewBox="0 0 15 14" shape-rendering="crispEdges"><path d="M11 10H14L11 13Z" fill="#8a8a8a"/><rect x="0.5" y="0.5" width="10" height="12" fill="#f3efe3" stroke="#5a524a"/><g fill="#0b6b66"><rect x="2" y="2" width="3" height="3"/><rect x="5" y="4" width="4" height="3"/><rect x="5" y="8" width="4" height="3"/><rect x="3" y="5" width="1" height="5"/><rect x="4" y="5" width="1" height="1"/><rect x="4" y="9" width="1" height="1"/></g></svg>
<div class="a" style="left:61px;top:430px;width:199px;height:12px;overflow:hidden"><div class="t s11" style="left:0;top:0;transform:scaleX(0.92);transform-origin:0 0">M - TINTEGGIATURE</div></div>
<!-- grid panel -->
<div class="a" style="left:265px;top:158px;width:1040px;height:367px;background:#fff"></div>
<div class="a bk" style="left:265px;top:158px;width:1057px;height:2px"></div>
<div class="a bk" style="left:265px;top:158px;width:1px;height:367px"></div>
<div class="a bk" style="left:266px;top:158px;width:1px;height:34px"></div>
<div class="a hdr" style="left:267px;top:160px;width:1037px;height:31px"></div>
<div class="a bk" style="left:267px;top:191px;width:1038px;height:1px"></div>
<div class="a bk" style="left:286px;top:160px;width:1px;height:31px"></div>
<div class="a bk" style="left:411px;top:160px;width:1px;height:31px"></div>
<div class="a bk" style="left:1214px;top:160px;width:1px;height:31px"></div>
<div class="a bk" style="left:1304px;top:160px;width:1px;height:31px"></div>
<div class="t" style="left:287px;top:171px;width:124px;text-align:center;color:#fff;font-weight:bold;font-size:11px;line-height:11px;letter-spacing:0.25px">Codice Tariffa</div>
<div class="t" style="left:412px;top:171px;width:802px;text-align:center;color:#fff;font-weight:bold;font-size:11px;line-height:11px;letter-spacing:0.3px">Descrizione estesa</div>
<div class="t" style="left:1215px;top:163px;width:89px;text-align:center;color:#fff;font-weight:bold;font-size:11px;line-height:13px;letter-spacing:0.3px">Tot. Prezzo 1<br>Euro</div>
<div class="a" style="left:267px;top:192px;width:1037px;height:30px;background:#fff"></div>
<div class="a" style="left:266px;top:222px;width:1039px;height:1px;background:#a0a0a0"></div>
<div class="t s11" style="left:288px;top:202px;letter-spacing:0.4px">F.001</div>
<div class="t" style="left:413px;top:195px;font-size:11px;line-height:13px;transform:scaleX(0.973);transform-origin:0 0">Pavimento in piastrelle di ceramica smaltata tipo monocottura di prima scelta, delle dimensioni di cm. 20x20, in opera su letto di malta cementizia, compreso nel prezzo,<br>previo spolvero di cemento, compresa la stuccatura dei giunti con cemento, i tagli, gli sfridi, la pulizia finale e quanto altro occorre.</div>
<div class="t s11" style="left:1215px;top:209px;width:87px;text-align:right;letter-spacing:0.3px">3.547,35</div>
<div class="a" style="left:267px;top:223px;width:1037px;height:30px;background:#f0ffff"></div>
<div class="a" style="left:266px;top:253px;width:1039px;height:1px;background:#a0a0a0"></div>
<div class="t s11" style="left:288px;top:233px;letter-spacing:0.4px">F.002</div>
<div class="t" style="left:413px;top:226px;font-size:11px;line-height:13px;transform:scaleX(0.973);transform-origin:0 0">Pavimento in lastre di marmo tipo Bianco Carrara, dello spessore di cm. 2, in opera su letto di malta bastarda, previo spolvero di cemento, compresa la fornitura e la<br>posa in opera del sottofondo, la stuccatura dei giunti con cemento, i tagli, gli sfridi, l'arrotatura e lucidatura a piombo, la pulizia finale e quanto altro occorre.</div>
<div class="t s11" style="left:1215px;top:240px;width:87px;text-align:right;letter-spacing:0.3px">8.186,93</div>
<div class="a" style="left:267px;top:254px;width:1037px;height:30px;background:#f9e624"></div>
<div class="a" style="left:266px;top:284px;width:1039px;height:1px;background:#a0a0a0"></div>
<div class="t s11" style="left:288px;top:264px;letter-spacing:0.4px">F.003</div>
<div class="t" style="left:413px;top:257px;font-size:11px;line-height:13px;transform:scaleX(0.973);transform-origin:0 0">Rivestimento in piastrelle di ceramica smaltata bianca o colorata, di prima scelta, delle dimensioni di cm. 20x20, in opera su pareti interne con colla, compresa la<br>stuccatura dei giunti con cemento di idoneo colore, compresi altresi' gli occorrenti pezzi speciali, la pulizia finale e quanto altro occorre, con l'esclusione dei ponteggi.</div>
<div class="t s11" style="left:1215px;top:271px;width:87px;text-align:right;letter-spacing:0.3px">822,02</div>
<div class="a" style="left:267px;top:285px;width:1037px;height:30px;background:#f0ffff"></div>
<div class="a" style="left:266px;top:315px;width:1039px;height:1px;background:#a0a0a0"></div>
<div class="t s11" style="left:288px;top:295px;letter-spacing:0.4px">F.004</div>
<div class="t" style="left:413px;top:288px;font-size:11px;line-height:13px;transform:scaleX(0.973);transform-origin:0 0">Rivestimento in piastrelle di ceramica smaltata bianca o colorata, di prima scelta, delle dimensioni di cm. 10x10, in opera su pareti interne con colla, compresa la<br>stuccatura dei giunti con cemento di idoneo colore, compresi altresi' gli occorrenti pezzi speciali, la pulizia finale e quanto altro occorre, con l'esclusione dei ponteggi.</div>
<div class="t s11" style="left:1215px;top:302px;width:87px;text-align:right;letter-spacing:0.3px">675,84</div>
<div class="a" style="left:267px;top:316px;width:1037px;height:30px;background:#fff"></div>
<div class="a" style="left:266px;top:346px;width:1039px;height:1px;background:#a0a0a0"></div>
<div class="t s11" style="left:288px;top:326px;letter-spacing:0.4px">F.005</div>
<div class="t" style="left:413px;top:319px;font-size:11px;line-height:13px;transform:scaleX(0.973);transform-origin:0 0">Zoccolino battiscopa in listelli di ceramica smaltata delle dimensioni di cm. 8x30, in opera con malta bastarda, compresa la stuccatura dei giunti con cemento di idoneo<br>colore, eventuali rasature, tagli, sfridi, la pulizia finale e quanto altro occorre.</div>
<div class="t s11" style="left:1215px;top:333px;width:87px;text-align:right;letter-spacing:0.3px">482,25</div>
<div class="a" style="left:267px;top:347px;width:1037px;height:30px;background:#f0ffff"></div>
<div class="a" style="left:266px;top:377px;width:1039px;height:1px;background:#a0a0a0"></div>
<div class="t s11" style="left:288px;top:357px;letter-spacing:0.4px">F.006</div>
<div class="t" style="left:413px;top:350px;font-size:11px;line-height:13px;transform:scaleX(0.973);transform-origin:0 0">Zoccolino battiscopa in marmo tipo bianco Carrara, dello spessore di cm. 1 e altezza variabile da cm. 7-9, in opera con malta bastarda, compreso la stuccatura dei<br>giunti con cemento di colore idoneo, eventuali rasature, tagli, sfridi, la pulizia finale e quanto altro occorre.</div>
<div class="t s11" style="left:1215px;top:364px;width:87px;text-align:right;letter-spacing:0.3px">498,75</div>
<div class="a" style="left:286px;top:192px;width:1px;height:186px;background:#a0a0a0"></div>
<div class="a" style="left:411px;top:192px;width:1px;height:186px;background:#a0a0a0"></div>
<div class="a" style="left:1214px;top:192px;width:1px;height:186px;background:#a0a0a0"></div>
<div class="a" style="left:1304px;top:192px;width:1px;height:186px;background:#a0a0a0"></div>
<div class="a" style="left:266px;top:500px;width:1039px;height:25px;background:#f0f0f0;border-top:1px solid #a0a0a0;border-bottom:1px solid #a0a0a0;border-right:1px solid #a0a0a0"></div>
<div class="a" style="left:414px;top:503px;width:799px;height:19px;border:1px solid #a0a0a0"></div>
<div class="t s11" style="left:900px;top:508px;width:309px;text-align:right">Totale computo:</div>
<div class="a" style="left:1217px;top:503px;width:85px;height:19px;border:1px solid #a0a0a0"></div>
<div class="t s11" style="left:1218px;top:508px;width:81px;text-align:right">103.573,17</div>
<div class="a" style="left:1305px;top:160px;width:17px;height:365px;background-color:#f4f4f4;background-image:repeating-conic-gradient(#e9e9e9 0 25%, #fdfdfd 0 50%);background-size:2px 2px"></div>
<div class="a" style="left:1305px;top:160px;width:17px;height:16px;background:#f0f0f0;border-right:1px solid #000;border-bottom:1px solid #000;border-top:1px solid #fff;border-left:1px solid #fff"></div>
<svg style="left:1309px;top:165px" width="9" height="5"><path d="M0 5H9L4.5 0Z" fill="#000"/></svg>
<div class="a" style="left:1305px;top:218px;width:17px;height:249px;background:#f0f0f0;border:1px solid #000"></div>
<div class="a" style="left:1305px;top:508px;width:17px;height:17px;background:#f0f0f0;border:1px solid #000"></div>
<svg style="left:1309px;top:514px" width="9" height="5"><path d="M0 0H9L4.5 5Z" fill="#000"/></svg>
<!-- right white strip -->
<div class="a" style="left:1322px;top:157px;width:24px;height:731px;background:#fff"></div>
<div class="a" style="left:1325px;top:161px;width:20px;height:151px;background:#f0f0f0;border-left:2px solid #a0a0a0;border-top:1px solid #a0a0a0"></div>
<svg style="left:1328px;top:166px" width="14" height="14" viewBox="0 0 14 14"><path d="M6 0.5H8L8.4 2.3L10 3L11.5 2L12.8 3.3L11.9 4.9L12.5 6.3L13.5 6.5V8.5L11.7 8.9L11.1 10.3L12 11.8L10.7 13L9.2 12.2L7.8 12.7L7.5 13.5H5.5L5.2 11.9L3.8 11.2L2.3 12.2L1 10.9L2 9.4L1.4 8L0.5 7.6V5.7L2.2 5.3L2.8 3.9L1.9 2.4L3.2 1.1L4.8 2L6.1 1.4Z" fill="#dde2ef" stroke="#5a6aa0" stroke-width="0.9"/><circle cx="7" cy="7" r="2" fill="none" stroke="#5a6aa0" stroke-width="0.9"/></svg>
<div class="t" style="left:1341px;top:186px;transform:rotate(90deg);transform-origin:0 0;font-weight:bold;font-size:12px;line-height:12px;color:#000">Pannello dei comandi</div>
<div class="a" style="left:1325px;top:316px;width:20px;height:92px;background:#f0f0f0;border-left:2px solid #a0a0a0;border-top:1px solid #a0a0a0;border-bottom:1px solid #a0a0a0"></div>
<svg style="left:1329px;top:320px" width="12" height="15" viewBox="0 0 12 15"><rect x="0.5" y="0.5" width="11" height="14" fill="#f4f7fc" stroke="#7e90c0"/><path d="M3 0.5V6L4.5 4.8L6 6V0.5Z" fill="#d02a2a"/><path d="M3 9H9 M3 11H9" stroke="#7e90c0"/></svg>
<div class="t" style="left:1341px;top:342px;transform:rotate(90deg);transform-origin:0 0;font-weight:bold;font-size:12px;line-height:12px;color:#000">Segnalibro</div>
<!-- bottom pane top line -->
<div class="a bk" style="left:2px;top:530px;width:1320px;height:1px"></div>
<div class="a" style="left:2px;top:531px;width:1320px;height:1px;background:#3a3a3a"></div>
<div class="a hdr" style="left:120px;top:532px;width:1202px;height:19px"></div>
<div class="a hdr" style="left:3px;top:532px;width:116px;height:354px"></div>
<div class="a bk" style="left:2px;top:530px;width:2px;height:80px"></div>
<div class="a bk" style="left:2px;top:610px;width:1px;height:276px"></div>
<div class="a" style="left:3px;top:610px;width:116px;height:1px;background:#f4f4f4"></div>
<div class="a" style="left:118px;top:532px;width:2px;height:354px;background:#e8e8e8"></div>
<div class="a" style="left:119px;top:610px;width:1px;height:276px;background:#c8c8c8"></div>
<svg style="left:40px;top:540px" width="40" height="40" viewBox="0 0 40 40"><path d="M7 20 L21 8 L33 14 L18.5 26.5Z" fill="#6a5030"/><path d="M21.0 7.0 L31.0 12.5 L31.0 17.0 L21.0 11.5Z" fill="#f4f4f4" stroke="#555" stroke-width="0.7"/><path d="M18.7 8.9 L28.7 14.4 L28.7 18.9 L18.7 13.4Z" fill="#f4f4f4" stroke="#555" stroke-width="0.7"/><path d="M16.4 10.8 L26.4 16.3 L26.4 20.8 L16.4 15.3Z" fill="#f4f4f4" stroke="#555" stroke-width="0.7"/><path d="M14.1 12.7 L24.1 18.2 L24.1 22.7 L14.1 17.2Z" fill="#f4f4f4" stroke="#555" stroke-width="0.7"/><path d="M11.8 14.6 L21.8 20.1 L21.8 24.6 L11.8 19.1Z" fill="#f4f4f4" stroke="#555" stroke-width="0.7"/><path d="M9.5 16.5 L19.5 22.0 L19.5 26.5 L9.5 21.0Z" fill="#f4f4f4" stroke="#555" stroke-width="0.7"/><path d="M7 20 L18.5 26.5 L18.5 35 L7 29Z" fill="#efb526" stroke="#8a5a00" stroke-width="0.6"/><path d="M9 24 L15 27.3 L15 31 L9 27.7Z" fill="#f6cc98" stroke="#9a5a20" stroke-width="0.5"/><path d="M18.5 26.5 L33 14 L33 21 L18.5 35Z" fill="#c88a10" stroke="#7a5000" stroke-width="0.6"/><path d="M18.5 26.5 L33 14" stroke="#ffd84a" stroke-width="1.3"/></svg>
<div class="t" style="left:3px;top:588px;width:116px;text-align:center;font-size:12px;color:#1e1e1e">Dettaglio voce</div>
<svg style="left:52px;top:623px" width="25" height="30" viewBox="0 0 25 30"><path d="M0.5 0.5H18L24.5 7V29.5H0.5Z" fill="#fff" stroke="#666"/><path d="M18 0.5V7H24.5" fill="#eee" stroke="#666"/><g stroke="#aaa" stroke-width="0.8" fill="none"><rect x="4" y="5" width="12" height="3"/><rect x="4" y="10" width="17" height="15"/><path d="M4 13H21M4 16H21M4 19H21M4 22H21M9 10V25M15 10V25"/></g></svg>
<div class="t" style="left:3px;top:667px;width:116px;text-align:center;font-size:11.5px;color:#fff">Misurazioni</div>
<svg style="left:40px;top:690px" width="40" height="40" viewBox="0 0 40 40">
<path d="M27 33 L35 31 L35 34 L28 37Z" fill="#777"/>
<path d="M23.5 13 H30.5 V33.5 L26 35 H23.5Z" fill="#c8205a" stroke="#000" stroke-width="0.9"/><path d="M27 14 V34" stroke="#8a0a30" stroke-width="2.5"/><path d="M24 14 H30" stroke="#f070a0" stroke-width="1"/>
<circle cx="25.5" cy="9.3" r="3.6" fill="#e6e6e6" stroke="#000" stroke-width="0.9"/>
<path d="M7.5 13 Q12 11.5 16.5 13 V33 H7.5Z" fill="#9898d8" stroke="#000" stroke-width="0.9"/><path d="M12 23 V33" stroke="#4a4a8a" stroke-width="1"/><path d="M14.5 14 V33" stroke="#3a3a7a" stroke-width="1.6"/>
<circle cx="12.8" cy="9.3" r="3.6" fill="#e6e6e6" stroke="#000" stroke-width="0.9"/>
<path d="M16 17 H26 V37 H16Z" fill="#ffc800" stroke="#000" stroke-width="0.9"/><path d="M23 17.5 H25.5 V36.5 H22Z" fill="#ff7a00"/><path d="M20 26 V37" stroke="#e05000" stroke-width="1"/><path d="M17 18 H25" stroke="#fff2a0" stroke-width="1"/>
<circle cx="20.8" cy="12.6" r="3.7" fill="#e6e6e6" stroke="#000" stroke-width="0.9"/>
<circle cx="20" cy="11.6" r="1.3" fill="#fff"/><circle cx="12" cy="8.3" r="1.3" fill="#fff"/><circle cx="24.7" cy="8.3" r="1.3" fill="#fff"/>
</svg>
<div class="t" style="left:3px;top:739px;width:116px;text-align:center;font-size:12px;line-height:14px;color:#fff">Incidenza<br>manodopera</div>
<svg style="left:128px;top:534px" width="14" height="15" viewBox="0 0 14 15"><defs><linearGradient id="ntg2" x1="0" y1="0" x2="0" y2="1"><stop offset="0" stop-color="#f6b840"/><stop offset="1" stop-color="#fde8a8"/></linearGradient></defs><rect x="0.5" y="2.5" width="12" height="12" rx="1" fill="url(#ntg2)" stroke="#c88038"/><circle cx="7.5" cy="3.5" r="2.8" fill="#4a8ad8" stroke="#2a5aa8" stroke-width="0.6"/><circle cx="8.3" cy="2.7" r="0.9" fill="#cfe4ff"/></svg>
<div class="t" style="left:145px;top:535px;font-weight:bold;font-size:13px;color:#fff">Dettaglio voce</div>
<div class="t" style="left:915px;top:536px;font-weight:bold;font-size:13px;color:#fff">Voce da completare</div>
<div class="a" style="left:1042px;top:535px;width:12px;height:12px;background:#f4e21a;border:1px solid #d8b800"></div>
<div class="a" style="left:1091px;top:536px;width:9px;height:9px;background:#fff"></div>
<div class="t" style="left:1105px;top:536px;font-size:12px;color:#f4f4f4">Attiva multiselezione</div>
<div class="t" style="left:1224px;top:536px;font-weight:bold;font-size:12px;color:#fff">OPERAZIONI</div>
<svg style="left:1309px;top:538px" width="8" height="8"><path d="M0 0H8L4 7Z" fill="#fff"/></svg>
<div class="a" style="left:540px;top:579px;width:69px;height:19px;background:#fff;border:1px solid #a0a0a0;border-left:none"></div>
<div class="a" style="left:592px;top:580px;width:15px;height:17px;background:#f0f0f0"></div>
<svg style="left:596px;top:586px" width="8" height="5"><path d="M0 0H8L4 4.5Z" fill="#000"/></svg>
<div class="a" style="left:611px;top:579px;width:56px;height:19px;background:#ffffe1;border:1px solid #c0c0c0"></div>
<div class="t s11" style="left:615px;top:584px">Quantità:</div>
<div class="a" style="left:669px;top:579px;width:111px;height:19px;background:#fff;border:1px solid #a0a0a0"></div>
<div class="t s11" style="left:670px;top:584px;width:90px;text-align:right">30,40</div>
<div class="a" style="left:763px;top:580px;width:16px;height:17px;background:#f0f0f0"></div>
<div class="t" style="left:764px;top:582px;font-weight:bold;font-size:12px;letter-spacing:0px">···</div>
<div class="a" style="left:239px;top:600px;width:1078px;height:236px;background:#fff;border:1px solid #a0a0a0"></div>
<div class="a" style="left:1299px;top:601px;width:17px;height:234px;background-color:#f4f4f4;background-image:repeating-conic-gradient(#ebebeb 0 25%, #fdfdfd 0 50%);background-size:2px 2px"></div>
<div class="a" style="left:1299px;top:601px;width:17px;height:17px;background:#f0f0f0;border:1px solid #a0a0a0"></div>
<svg style="left:1302px;top:606px" width="11" height="6"><path d="M0 6H11L5.5 0Z" fill="#a0a0a0"/></svg>
<div class="a" style="left:1299px;top:818px;width:17px;height:17px;background:#f0f0f0;border:1px solid #a0a0a0"></div>
<svg style="left:1302px;top:823px" width="11" height="6"><path d="M0 0H11L5.5 6Z" fill="#a0a0a0"/></svg>
<div class="t" style="left:549px;top:603px;font-size:11px;line-height:13px;transform:scaleX(0.973);transform-origin:0 0">&nbsp;di prima scelta, delle dimensioni di cm. <span style="text-decoration:underline wavy #e02020">20x20</span>, in opera su pareti interne con colla, compresa la stuccatura dei giunti con cemento di idoneo colore, compresi<br>occorre, con l'esclusione dei ponteggi.</div>
<div class="a" style="left:126px;top:838px;width:73px;height:19px;background:#ffffe1;border:1px solid #a0a0a0"></div>
<div class="t s11" style="left:129px;top:843px">Prezzo 1:</div>
<div class="a" style="left:201px;top:838px;width:64px;height:19px;background:#fff;border:1px solid #a0a0a0"></div>
<div class="a" style="left:267px;top:838px;width:73px;height:19px;background:#ffffe1;border:1px solid #a0a0a0"></div>
<div class="t s11" style="left:270px;top:843px">Prezzo 2:</div>
<div class="a" style="left:342px;top:838px;width:64px;height:19px;background:#fff;border:1px solid #a0a0a0"></div>
<div class="a" style="left:407px;top:838px;width:73px;height:19px;background:#ffffe1;border:1px solid #a0a0a0"></div>
<div class="t s11" style="left:410px;top:843px">Prezzo 3:</div>
<div class="a" style="left:482px;top:838px;width:64px;height:19px;background:#fff;border:1px solid #a0a0a0"></div>
<div class="a" style="left:548px;top:838px;width:73px;height:19px;background:#ffffe1;border:1px solid #a0a0a0"></div>
<div class="t s11" style="left:551px;top:843px">Prezzo 4:</div>
<div class="a" style="left:623px;top:838px;width:64px;height:19px;background:#fff;border:1px solid #a0a0a0"></div>
<div class="a" style="left:688px;top:838px;width:73px;height:19px;background:#ffffe1;border:1px solid #a0a0a0"></div>
<div class="t s11" style="left:691px;top:843px">Prezzo 5:</div>
<div class="a" style="left:763px;top:838px;width:64px;height:19px;background:#fff;border:1px solid #a0a0a0"></div>
<div class="a" style="left:126px;top:859px;width:73px;height:19px;background:#ffffe1;border:1px solid #a0a0a0"></div>
<div class="t s11" style="left:129px;top:864px">Prezzo 6:</div>
<div class="a" style="left:201px;top:859px;width:64px;height:19px;background:#fff;border:1px solid #a0a0a0"></div>
<div class="a" style="left:267px;top:859px;width:73px;height:19px;background:#ffffe1;border:1px solid #a0a0a0"></div>
<div class="t s11" style="left:270px;top:864px">Prezzo 7:</div>
<div class="a" style="left:342px;top:859px;width:64px;height:19px;background:#fff;border:1px solid #a0a0a0"></div>
<div class="a" style="left:407px;top:859px;width:73px;height:19px;background:#ffffe1;border:1px solid #a0a0a0"></div>
<div class="t s11" style="left:410px;top:864px">Prezzo 8:</div>
<div class="a" style="left:482px;top:859px;width:64px;height:19px;background:#fff;border:1px solid #a0a0a0"></div>
<div class="a" style="left:548px;top:859px;width:73px;height:19px;background:#ffffe1;border:1px solid #a0a0a0"></div>
<div class="t s11" style="left:551px;top:864px">Prezzo 9:</div>
<div class="a" style="left:623px;top:859px;width:64px;height:19px;background:#fff;border:1px solid #a0a0a0"></div>
<div class="a" style="left:688px;top:859px;width:73px;height:19px;background:#ffffe1;border:1px solid #a0a0a0"></div>
<div class="t s11" style="left:691px;top:864px">Prezzo 10:</div>
<div class="a" style="left:763px;top:859px;width:64px;height:19px;background:#fff;border:1px solid #a0a0a0"></div>
<div class="t s11" style="left:202px;top:843px;width:61px;text-align:right">27,04</div>
<div class="a" style="left:1px;top:886px;width:1346px;height:21px;background:#f0f0f0;border-top:1px solid #fff"></div>
<div class="a" style="left:1px;top:889px;width:1039px;height:18px;border-left:1px solid #a0a0a0;border-top:1px solid #a0a0a0;border-right:2px solid #fff"></div>
<div class="a" style="left:1041px;top:889px;width:68px;height:18px;border-left:1px solid #a0a0a0;border-top:1px solid #a0a0a0;border-right:2px solid #fff"></div>
<div class="a" style="left:1110px;top:889px;width:158px;height:18px;border-left:1px solid #a0a0a0;border-top:1px solid #a0a0a0;border-right:2px solid #fff"></div>
<div class="a" style="left:1269px;top:889px;width:33px;height:18px;border-left:1px solid #a0a0a0;border-top:1px solid #a0a0a0;border-right:2px solid #fff"></div>
<div class="a" style="left:1303px;top:889px;width:29px;height:18px;border-left:1px solid #a0a0a0;border-top:1px solid #a0a0a0;border-right:2px solid #fff"></div>
<div class="t s11" style="left:1050px;top:893px">v. 10.01u</div>
<div class="t s11" style="left:1271px;top:893px;color:#a0a0a0">MAIU</div>
<div class="t s11" style="left:1304px;top:893px">NUM</div>
<svg style="left:1333px;top:893px" width="12" height="12"><path d="M11 1L1 11M11 5L5 11M11 9L9 11" stroke="#a0a0a0" stroke-width="1"/></svg>
<!-- popup -->
<div class="a" style="left:121px;top:549px;width:427px;height:268px;background:#f0f0f0;border-left:1px solid #fafafa;border-top:1px solid #fafafa;border-right:2px solid #6d6d6d;border-bottom:2px solid #6d6d6d"></div>
<div class="a" style="left:125px;top:551px;width:421px;height:242px;border:1px solid #1a78dc"></div>
<div class="t s11" style="left:130px;top:558px;font-weight:bold">Appunti (Shift+Ctrl+A)</div>
<svg style="left:526px;top:555px" width="14" height="15" viewBox="0 0 14 15"><defs><linearGradient id="ntg" x1="0" y1="0" x2="0" y2="1"><stop offset="0" stop-color="#f6b840"/><stop offset="1" stop-color="#fde8a8"/></linearGradient></defs><rect x="0.5" y="2.5" width="12" height="12" rx="1" fill="url(#ntg)" stroke="#c88038"/><circle cx="7.5" cy="3.5" r="2.8" fill="#4a8ad8" stroke="#2a5aa8" stroke-width="0.6"/><circle cx="8.3" cy="2.7" r="0.9" fill="#cfe4ff"/></svg>
<div class="a" style="left:130px;top:574px;width:411px;height:183px;background:#fff;border:1px solid #1a78dc"></div>
<div class="t" style="left:132px;top:578px;font-size:11px;line-height:11px;letter-spacing:0.3px">Chiedere ulteriori informazioni ...</div>
<div class="a" style="left:523px;top:575px;width:17px;height:181px;background-color:#f4f4f4;background-image:repeating-conic-gradient(#ebebeb 0 25%, #fdfdfd 0 50%);background-size:2px 2px"></div>
<div class="a" style="left:523px;top:575px;width:17px;height:17px;background:#f0f0f0;border:1px solid #a8a8a8"></div>
<svg style="left:526px;top:580px" width="11" height="6"><path d="M0 6H11L5.5 0Z" fill="#a0a0a0"/></svg>
<div class="a" style="left:523px;top:739px;width:17px;height:17px;background:#f0f0f0;border:1px solid #a8a8a8"></div>
<svg style="left:526px;top:744px" width="11" height="6"><path d="M0 0H11L5.5 6Z" fill="#a0a0a0"/></svg>
<div class="a" style="left:233px;top:761px;width:100px;height:24px;background:#c5e0f4;border:1px solid #96c8ee"></div>
<div class="a" style="left:142px;top:767px;width:12px;height:12px;background:linear-gradient(#e8e8e8,#b8b8b8);border:1px solid #8a8a8a"></div>
<div class="t" style="left:160px;top:768px;font-size:11.5px;line-height:11px">Completato</div>
<div class="a" style="left:238px;top:767px;width:12px;height:12px;background:linear-gradient(#fff27a,#e8d400);border:1px solid #c0a800"></div>
<div class="t" style="left:256px;top:768px;font-size:11.5px;line-height:11px">Da completare</div>
<div class="a" style="left:341px;top:767px;width:12px;height:12px;background:linear-gradient(#b8f4f4,#60d8d8);border:1px solid #40b0b0"></div>
<div class="t" style="left:359px;top:768px;font-size:11.5px;line-height:11px">Da controllare</div>
<div class="a" style="left:444px;top:767px;width:12px;height:12px;background:linear-gradient(#f8a080,#e04a2a);border:1px solid #b03010"></div>
<div class="t" style="left:462px;top:768px;font-size:11.5px;line-height:11px">Da aggiornare</div>
<div class="a" style="left:128px;top:796px;width:14px;height:15px;border:1px solid #000;background:#f0f0f0"></div>
<svg style="left:131px;top:800px" width="9" height="8"><path d="M0.5 0.5L8 7.5M8 0.5L0.5 7.5" stroke="#000" stroke-width="1.3"/></svg>
<svg style="left:533px;top:801px" width="12" height="12"><path d="M11 1L1 11M11 5L5 11M11 9L9 11" stroke="#909090" stroke-width="1"/></svg>
<svg style="left:0;top:0" width="1348" height="908"><path d="M398.7 395.2 L158 529" stroke="#800000" stroke-width="5.2"/><path d="M140.4 538.6 L155.7 516.2 L167.8 537Z" fill="#800000"/></svg>
<div class="a" style="left:0;top:0;width:1348px;height:908px;border:1px solid #2b579a;pointer-events:none"></div>

</body></html>
